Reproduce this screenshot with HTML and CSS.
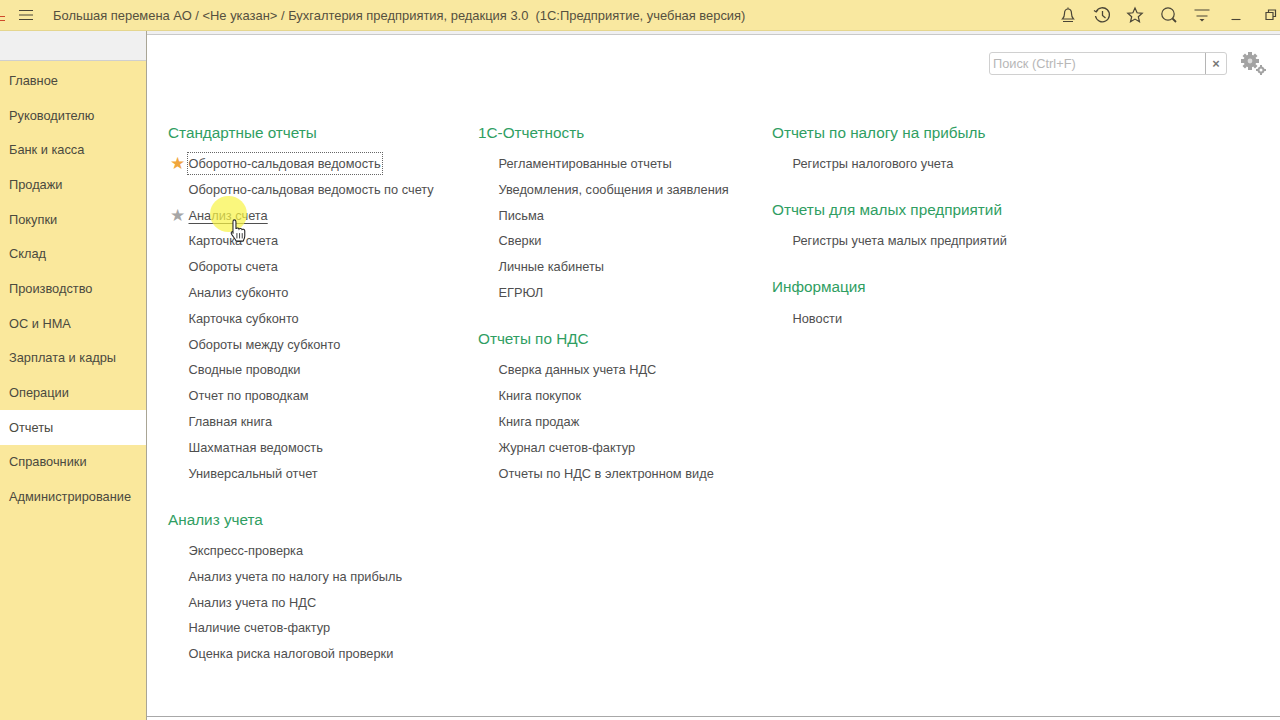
FILE: index.html
```html
<!DOCTYPE html>
<html lang="ru">
<head>
    <meta charset="UTF-8">
    <meta name="viewport" content="width=device-width, initial-scale=1.0">
    <title>Бухгалтерия предприятия</title>
    <link rel="stylesheet" href="styles.css">
</head>
<body>
    <header class="titlebar">
        <div class="app-mark"></div>
        <svg class="menu-icon" width="16" height="12" viewBox="0 0 16 12"><path d="M1 1.500h14M1 6h14M1 10.500h14" stroke="#4a4536" stroke-width="1.200" fill="none"/></svg>
        <div class="app-title">Большая перемена АО / &lt;Не указан&gt; / Бухгалтерия предприятия, редакция 3.0&nbsp; (1С:Предприятие, учебная версия)</div>
        <div class="title-tools">
            <svg class="tool" width="18" height="18" viewBox="0 0 18 18"><path d="M3.500 13c1.500-1.500 2-3 2-5.500C5.500 4.500 7 3 9 3s3.500 1.500 3.500 4.500c0 2.500.5 4 2 5.500zM4 15.500h10M9 1.500V3" stroke="#4a4536" stroke-width="1.200" fill="none"/></svg>
            <svg class="tool" width="18" height="18" viewBox="0 0 18 18"><path d="M3.200 5.500A7 7 0 1 1 2.500 10M1 4.500l2.200 1.500 1.800-2.200M9.500 5v4.500l3 2.500" stroke="#4a4536" stroke-width="1.300" fill="none"/></svg>
            <svg class="tool" width="18" height="18" viewBox="0 0 18 18"><path d="M9 2l2.100 4.800 5.100.5-3.900 3.400 1.200 5.100L9 13.100l-4.500 2.700 1.200-5.100-3.900-3.400 5.100-.5z" stroke="#4a4536" stroke-width="1.200" fill="none"/></svg>
            <svg class="tool" width="18" height="18" viewBox="0 0 18 18"><circle cx="8" cy="8" r="6.200" stroke="#4a4536" stroke-width="1.200" fill="none"/><path d="M12.500 12.500l3.500 3.500" stroke="#4a4536" stroke-width="1.800"/></svg>
            <svg class="tool" width="18" height="18" viewBox="0 0 18 18"><path d="M1.500 4h15M3.500 10h11" stroke="#4a4536" stroke-width="1.100" fill="none"/><path d="M6.500 13h5L9 15.500z" fill="#4a4536"/></svg>
            <svg class="tool" width="18" height="18" viewBox="0 0 18 18"><path d="M4.500 13.500h9" stroke="#4a4536" stroke-width="1.100"/></svg>
            <svg class="tool tool-last" width="12" height="12" viewBox="0 0 12 12"><path d="M3.500 3V1h7v6.500H8M1 3.500h7v7H1z" stroke="#4a4536" stroke-width="1.200" fill="none"/></svg>
        </div>
    </header>

    <div class="workspace">
        <aside class="sidebar">
            <div class="sidebar-top"></div>
            <nav class="sections">
                <div class="section-link">Главное</div>
                <div class="section-link">Руководителю</div>
                <div class="section-link">Банк и касса</div>
                <div class="section-link">Продажи</div>
                <div class="section-link">Покупки</div>
                <div class="section-link">Склад</div>
                <div class="section-link">Производство</div>
                <div class="section-link">ОС и НМА</div>
                <div class="section-link">Зарплата и кадры</div>
                <div class="section-link">Операции</div>
                <div class="section-link active">Отчеты</div>
                <div class="section-link">Справочники</div>
                <div class="section-link">Администрирование</div>
            </nav>
        </aside>

        <main class="content">
            <div class="search-row">
                <div class="search-box">
                    <div class="search-input">Поиск (Ctrl+F)</div>
                    <div class="search-clear">×</div>
                </div>
                <svg class="settings" width="28" height="26" viewBox="0 0 28 26">
                    <g fill="#a3a3a3">
                        <circle cx="11" cy="10" r="6.500"/>
                        <path d="M9 1h4v3h-4zM9 16h4v3H9zM2 8h3v4H2zM17 8h3v4h-3zM3.500 5l2.500-2.500 2 2-2.500 2.500zM14 15.500l2.500-2.500 2 2-2.500 2.500zM3.500 15l2-2 2.500 2.500-2 2zM14 4.500l2-2 2.500 2.500-2 2z"/>
                        <circle cx="22" cy="19" r="3.500"/>
                        <path d="M21 14h2v2h-2zM21 22h2v2h-2zM17 18h2v2h-2zM25 18h2v2h-2z"/>
                    </g>
                    <circle cx="11" cy="10" r="2.400" fill="#dcdcdc"/>
                    <circle cx="22" cy="19" r="1.500" fill="#fff"/>
                </svg>
            </div>

            <div class="report-columns">
                <div class="report-col col-one">
                    <section class="group">
                        <h2>Стандартные отчеты</h2>
                        <div class="report focused"><span class="star gold">★</span><span class="label">Оборотно-сальдовая ведомость</span></div>
                        <div class="report">Оборотно-сальдовая ведомость по счету</div>
                        <div class="report"><span class="star grey">★</span><span class="label hovered">Анализ счета</span></div>
                        <div class="report">Карточка счета</div>
                        <div class="report">Обороты счета</div>
                        <div class="report">Анализ субконто</div>
                        <div class="report">Карточка субконто</div>
                        <div class="report">Обороты между субконто</div>
                        <div class="report">Сводные проводки</div>
                        <div class="report">Отчет по проводкам</div>
                        <div class="report">Главная книга</div>
                        <div class="report">Шахматная ведомость</div>
                        <div class="report">Универсальный отчет</div>
                    </section>
                    <section class="group">
                        <h2>Анализ учета</h2>
                        <div class="report">Экспресс-проверка</div>
                        <div class="report">Анализ учета по налогу на прибыль</div>
                        <div class="report">Анализ учета по НДС</div>
                        <div class="report">Наличие счетов-фактур</div>
                        <div class="report">Оценка риска налоговой проверки</div>
                    </section>
                </div>
                <div class="report-col col-two">
                    <section class="group">
                        <h2>1С-Отчетность</h2>
                        <div class="report">Регламентированные отчеты</div>
                        <div class="report">Уведомления, сообщения и заявления</div>
                        <div class="report">Письма</div>
                        <div class="report">Сверки</div>
                        <div class="report">Личные кабинеты</div>
                        <div class="report">ЕГРЮЛ</div>
                    </section>
                    <section class="group">
                        <h2>Отчеты по НДС</h2>
                        <div class="report">Сверка данных учета НДС</div>
                        <div class="report">Книга покупок</div>
                        <div class="report">Книга продаж</div>
                        <div class="report">Журнал счетов-фактур</div>
                        <div class="report">Отчеты по НДС в электронном виде</div>
                    </section>
                </div>
                <div class="report-col col-three">
                    <section class="group">
                        <h2>Отчеты по налогу на прибыль</h2>
                        <div class="report">Регистры налогового учета</div>
                    </section>
                    <section class="group">
                        <h2>Отчеты для малых предприятий</h2>
                        <div class="report">Регистры учета малых предприятий</div>
                    </section>
                    <section class="group">
                        <h2>Информация</h2>
                        <div class="report">Новости</div>
                    </section>
                </div>
            </div>

            <div class="content-bottom"></div>
        </main>
    </div>

    <div class="click-spot"></div>
    <svg class="hand-cursor" width="17" height="26" viewBox="0 0 16 24"><path d="M4 1.500c1 0 1.600.7 1.600 1.700V10c.3-1 2.500-1.200 2.900.2.500-.9 2.400-.9 2.800.4.700-.6 2.500-.3 2.600 1.200v5c0 2-.8 3.200-1.500 4.700H5.800c-1-2-2.500-3.800-4-6-.8-1.200-.9-2.300 0-2.700.7-.3 1.500.2 1 1.700V3.200c0-1 .3-1.700 1.200-1.700z" fill="#fff" stroke="#222" stroke-width="1"/><path d="M6.500 14v5M9 14v5M11.500 14v5" stroke="#222" stroke-width=".8"/></svg>
</body>
</html>
```

FILE: styles.css
```css
* {
    box-sizing: border-box;
}

html, body {
    height: 100%;
}

body {
    margin: 0;
    width: 1280px;
    height: 720px;
    overflow: hidden;
    display: flex;
    flex-direction: column;
    position: relative;
    font-family: "Liberation Sans", Arial, sans-serif;
    font-size: 12.800px;
    color: #4f4f4f;
    background: #fff;
}

.titlebar {
    height: 31px;
    flex: none;
    display: flex;
    align-items: center;
    background: #f9e8a0;
    border-bottom: 1px solid #e5d68e;
}

.app-mark {
    width: 5px;
    height: 5px;
    margin-top: 7px;
    border-top: 1px solid #cf4a2a;
    border-bottom: 1px solid #cf4a2a;
}

.menu-icon {
    margin-left: 13px;
}

.app-title {
    margin-left: 19px;
    font-size: 12.930px;
    color: #55503f;
    white-space: nowrap;
}

.title-tools {
    margin-left: auto;
    display: flex;
    align-items: center;
    gap: 15.500px;
    padding-right: 3px;
}

.tool-last {
    margin-left: 5px;
}

.workspace {
    flex: 1;
    display: flex;
    min-height: 0;
    background: #f0f0f0;
}

.sidebar {
    width: 147px;
    flex: none;
    display: flex;
    flex-direction: column;
    background: #fae89c;
    border-right: 1px solid #a9a595;
}

.sidebar-top {
    height: 30px;
    flex: none;
    background: #f0f0f0;
    border-bottom: 1px solid #cfcfcf;
}

.sections {
    padding-top: 2px;
}

.section-link {
    height: 34.700px;
    padding-left: 9px;
    display: flex;
    align-items: center;
    color: #4b4a3f;
}

.section-link.active {
    background: #fff;
}

.content {
    flex: 1;
    display: flex;
    flex-direction: column;
    margin-top: 3px;
    border-top: 1px solid #c9c9c9;
    background: #fff;
}

.search-row {
    display: flex;
    justify-content: flex-end;
    align-items: center;
    gap: 12px;
    padding: 9px 13px 0 0;
    height: 48px;
}

.search-box {
    width: 238px;
    height: 23px;
    display: flex;
    border: 1px solid #d0d0d0;
    border-radius: 3px;
}

.search-input {
    flex: 1;
    padding-left: 3px;
    line-height: 22px;
    color: #b7b7b7;
    border-right: 1px solid #b5b5b5;
}

.search-clear {
    width: 20px;
    text-align: center;
    line-height: 21px;
    font-weight: bold;
    color: #777;
}

.settings {
    margin-top: 1px;
}

.report-columns {
    flex: 1;
    display: flex;
    padding: 36.700px 0 0 21px;
}

.col-one {
    width: 310px;
}

.col-two {
    width: 294px;
}

.group {
    margin-bottom: 20.500px;
}

.group h2 {
    margin: 0;
    height: 31px;
    font-size: 15.300px;
    font-weight: normal;
    line-height: 26px;
    color: #2f9e62;
}

.report {
    height: 25.800px;
    padding-left: 20.500px;
    display: flex;
    align-items: center;
    position: relative;
    white-space: nowrap;
}

.star {
    position: absolute;
    left: 2px;
    font-size: 17px;
    line-height: 1;
    font-family: "DejaVu Sans", sans-serif;
}

.star.gold {
    color: #f0a63c;
}

.star.grey {
    color: #a6a6a6;
}

.focused .label {
    padding: 3px 1px;
    margin-left: -1px;
    outline: 1px dotted #666;
}

.hovered {
    text-decoration: underline;
    text-underline-offset: 3px;
}

.content-bottom {
    height: 4px;
    flex: none;
    border-top: 1px solid #a8a8a8;
}

.click-spot {
    position: absolute;
    left: 210px;
    top: 196px;
    width: 37px;
    height: 36px;
    border-radius: 50%;
    background: rgba(248, 243, 70, 0.7);
}

.hand-cursor {
    position: absolute;
    left: 230px;
    top: 218px;
}
```
